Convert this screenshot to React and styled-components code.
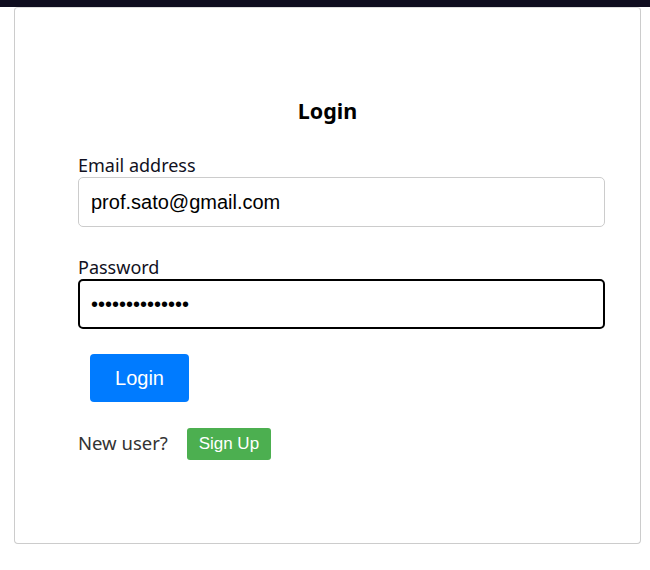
import React, { useState } from 'react';
import styled, { createGlobalStyle } from 'styled-components';

const GlobalStyle = createGlobalStyle`
  body {
    margin: 0;
    background: #ffffff;
    font-family: "Noto Sans", "Open Sans", sans-serif;
  }
`;

const App = () => {
  const [email, setEmail] = useState('prof.sato@gmail.com');
  const [password, setPassword] = useState('password123456');

  return (
    <>
      <GlobalStyle />
      <TopBar />
      <Page>
        <Card>
          <Title>Login</Title>
          <Form onSubmit={(e) => e.preventDefault()}>
            <Field>
              <Label>Email address</Label>
              <Input type="email" value={email} onChange={(e) => setEmail(e.target.value)} />
            </Field>
            <Field>
              <Label>Password</Label>
              <Input
                type="password"
                $focused
                value={password}
                onChange={(e) => setPassword(e.target.value)}
              />
            </Field>
            <LoginButton type="submit">Login</LoginButton>
            <SignupRow>
              <Prompt>New user?</Prompt>
              <SignupButton type="button">Sign Up</SignupButton>
            </SignupRow>
          </Form>
        </Card>
      </Page>
    </>
  );
};

export default App;

// Styled Components
const TopBar = styled.div`
  height: 7px;
  background-color: #0f0d1f;
`;

const Page = styled.div`
  padding: 0 9px 0 14px;
`;

const Card = styled.div`
  box-sizing: border-box;
  height: 537px;
  border: 1px solid #cccccc;
  border-top-color: #dddddd;
  border-radius: 4px;
  padding-top: 89px;
  background-color: #ffffff;
`;

const Title = styled.h2`
  margin: 0 0 29px;
  text-align: center;
  font-size: 21.5px;
  line-height: 27px;
  font-weight: 700;
  color: #000000;
`;

const Form = styled.form`
  padding: 0 35px 0 63px;
`;

const Field = styled.div`
  display: flex;
  flex-direction: column;
  margin-bottom: 28px;
`;

const Label = styled.label`
  font-size: 18px;
  color: #111122;
  line-height: 24px;
`;

const Input = styled.input`
  box-sizing: border-box;
  height: 50px;
  padding: 0 12px;
  font-family: "Liberation Sans", Arial, sans-serif;
  font-size: 20px;
  color: #000000;
  border: ${(p) => (p.$focused ? '2px solid #000000' : '1px solid #cccccc')};
  border-radius: 5px;
  outline: none;
  padding-left: ${(p) => (p.$focused ? '11px' : '12px')};
`;

const LoginButton = styled.button`
  display: block;
  margin: -3px 0 0 12px;
  width: 99px;
  height: 48px;
  border: none;
  border-radius: 4px;
  background-color: #007bff;
  color: #ffffff;
  font-family: "Liberation Sans", Arial, sans-serif;
  font-size: 20px;
  cursor: pointer;
`;

const SignupRow = styled.div`
  display: flex;
  align-items: center;
  gap: 19px;
  margin-top: 26px;
  font-size: 18.5px;
  color: #333333;
`;

const Prompt = styled.span`
  margin-top: -4px;
`;

const SignupButton = styled.button`
  width: 84px;
  height: 32px;
  border: none;
  border-radius: 3px;
  background-color: #4caf50;
  color: #ffffff;
  font-family: "Liberation Sans", Arial, sans-serif;
  font-size: 17px;
  cursor: pointer;
`;
